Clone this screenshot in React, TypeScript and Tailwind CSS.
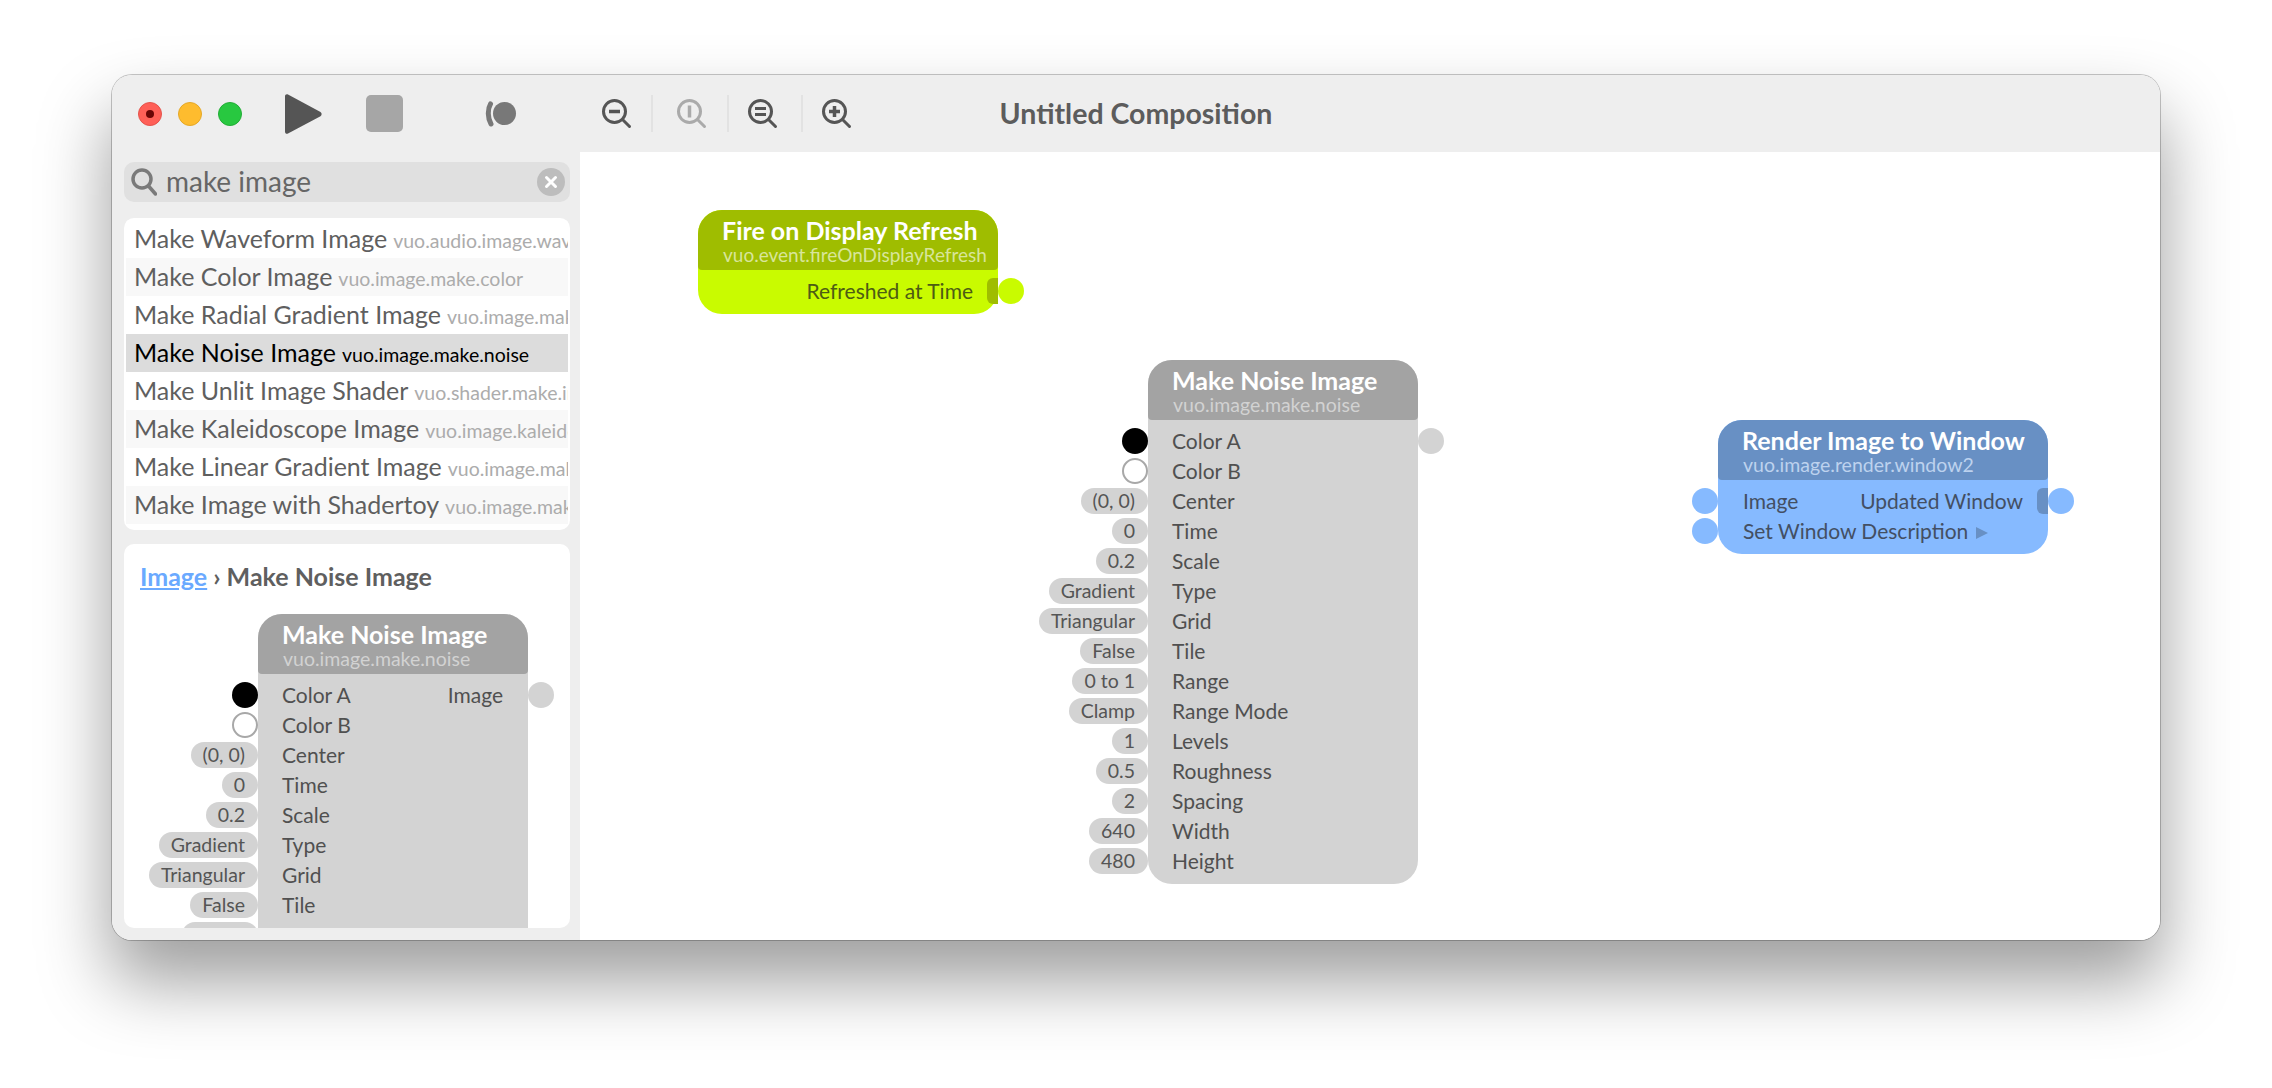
const font = "font-['Lato','Liberation_Sans',sans-serif]";

type Row = { label: string; value?: string; port?: "black" | "white" | "plain" };

const noiseRows: Row[] = [
	{ label: "Color A", port: "black" },
	{ label: "Color B", port: "white" },
	{ label: "Center", value: "(0, 0)" },
	{ label: "Time", value: "0" },
	{ label: "Scale", value: "0.2" },
	{ label: "Type", value: "Gradient" },
	{ label: "Grid", value: "Triangular" },
	{ label: "Tile", value: "False" },
	{ label: "Range", value: "0 to 1" },
	{ label: "Range Mode", value: "Clamp" },
	{ label: "Levels", value: "1" },
	{ label: "Roughness", value: "0.5" },
	{ label: "Spacing", value: "2" },
	{ label: "Width", value: "640" },
	{ label: "Height", value: "480" },
];

const results = [
	["Make Waveform Image", "vuo.audio.image.waveform"],
	["Make Color Image", "vuo.image.make.color"],
	["Make Radial Gradient Image", "vuo.image.make.gradient.radial"],
	["Make Noise Image", "vuo.image.make.noise"],
	["Make Unlit Image Shader", "vuo.shader.make.image.unlit"],
	["Make Kaleidoscope Image", "vuo.image.kaleidoscope"],
	["Make Linear Gradient Image", "vuo.image.make.gradient.linear"],
	["Make Image with Shadertoy", "vuo.image.make.shadertoy"],
];

function ZoomIcon({ color, mark }: { color: string; mark: "minus" | "one" | "fit" | "plus" }) {
	return (
		<svg width="30" height="30" viewBox="0 0 30 30" fill="none" stroke={color} strokeWidth="3" strokeLinecap="round">
			<circle cx="12.500" cy="12.500" r="11" />
			<path d="M20.500 20.500l7 7" />
			{mark === "minus" && <path d="M7 12.500h11" strokeWidth="3.500" strokeLinecap="butt" />}
			{mark === "one" && <path d="M12.500 6.500v12" strokeWidth="3.500" strokeLinecap="butt" />}
			{mark === "fit" && <path d="M7 9.500h11M7 15.500h11" strokeWidth="3" strokeLinecap="butt" />}
			{mark === "plus" && <path d="M7 12.500h11M12.500 7v11" strokeWidth="3.500" strokeLinecap="butt" />}
		</svg>
	);
}

function Separator() {
	return <div className="w-[2px] h-[37px] bg-[#e2e2e2]" />;
}

function Toolbar() {
	return (
		<div className="relative h-[77px] bg-[#eeeeee] flex items-center pl-[26px] shrink-0">
			<div className="flex gap-[16px]">
				<div className="w-[24px] h-[24px] rounded-full bg-[#ff5f57] border border-[#e5534b] flex items-center justify-center">
					<div className="w-[8px] h-[8px] rounded-full bg-[#6b0505]" />
				</div>
				<div className="w-[24px] h-[24px] rounded-full bg-[#febc2e] border border-[#e5a827]" />
				<div className="w-[24px] h-[24px] rounded-full bg-[#28c840] border border-[#22ad36]" />
			</div>
			<svg className="ml-[43px]" width="37" height="42" viewBox="0 0 37 42">
				<path d="M3 1.500 35.500 19a2.500 2.500 0 0 1 0 4.200L3 40.500C1.500 41.300 0 40.300 0 38.700V3.300C0 1.700 1.500 .7 3 1.500z" fill="#555555" />
			</svg>
			<div className="ml-[44px] w-[37px] h-[37px] rounded-[5px] bg-[#a6a6a6]" />
			<svg className="ml-[82px]" width="32" height="26" viewBox="0 0 32 26">
				<circle cx="19.500" cy="12.500" r="11.500" fill="#787878" />
				<path d="M5.500 3C2.500 8 2.500 17 6 23" fill="none" stroke="#787878" strokeWidth="5" strokeLinecap="round" />
			</svg>
			<div className="ml-[85px] flex items-center">
				<ZoomIcon color="#555555" mark="minus" />
				<div className="ml-[19px]"><Separator /></div>
				<div className="ml-[24px]"><ZoomIcon color="#aaaaaa" mark="one" /></div>
				<div className="ml-[20px]"><Separator /></div>
				<div className="ml-[19px]"><ZoomIcon color="#555555" mark="fit" /></div>
				<div className="ml-[23px]"><Separator /></div>
				<div className="ml-[19px]"><ZoomIcon color="#555555" mark="plus" /></div>
			</div>
			<div className="absolute inset-x-0 top-0 h-[77px] flex items-center justify-center text-[28.500px] font-bold text-[#5c5c5c]">
				Untitled Composition
			</div>
		</div>
	);
}

function Port({ className }: { className: string }) {
	return <div className={`w-[26px] h-[26px] rounded-full ${className}`} />;
}

function Pill({ text }: { text: string }) {
	return (
		<div className="absolute right-full top-0 h-[26px] pl-[12px] pr-[13px] rounded-full bg-[#d3d3d3] text-[#555555] text-[19.500px] leading-[26px] whitespace-nowrap">
			{text}
		</div>
	);
}

function NoiseNode({ output }: { output?: string }) {
	return (
		<div className="w-[270px] bg-[#d3d3d3] rounded-[24px] relative pb-[10px]">
			<div className="h-[60px] bg-[#a3a3a3] rounded-t-[24px] rounded-b-[4px] pl-[24px] pt-[7px]">
				<div className="text-[25px] leading-[27px] font-bold text-white">Make Noise Image</div>
				<div className="text-[19.500px] leading-[22px] pl-[1px] text-[#d2d2d2]">vuo.image.make.noise</div>
			</div>
			<div className="pt-[8px] flex flex-col gap-[4px]">
				{noiseRows.map((row, i) => (
					<div key={row.label} className="relative h-[26px] pl-[24px] pr-[25px] flex justify-between text-[21px] leading-[26px] text-[#505050]">
						{row.port === "black" && <Port className="absolute right-full top-0 bg-black" />}
						{row.port === "white" && <Port className="absolute right-full top-0 bg-white border-2 border-[#a8a8a8]" />}
						{row.value && <Pill text={row.value} />}
						<span>{row.label}</span>
						{i === 0 && output && <span>{output}</span>}
						{i === 0 && <Port className="absolute left-full top-0 bg-[#d3d3d3]" />}
					</div>
				))}
			</div>
		</div>
	);
}

function FireNode() {
	return (
		<div className="absolute left-[118px] top-[58px] w-[300px] bg-[#c9fb00] rounded-[24px] pb-[10px]">
			<div className="h-[60px] bg-[#9fbd00] rounded-t-[24px] rounded-b-[4px] pl-[24px] pt-[7px]">
				<div className="text-[25px] leading-[27px] font-bold text-white whitespace-nowrap">Fire on Display Refresh</div>
				<div className="text-[19px] leading-[22px] pl-[1px] text-[#d8e59a] whitespace-nowrap">vuo.event.fireOnDisplayRefresh</div>
			</div>
			<div className="relative mt-[8px] h-[26px] pr-[25px] text-right text-[21px] leading-[26px] text-[#4d5c14]">
				Refreshed at Time
				<div className="absolute right-0 top-0 w-[11px] h-[26px] rounded-l-[6px] bg-[#9fbd00]" />
				<Port className="absolute left-full top-0 bg-[#c9fb00]" />
			</div>
		</div>
	);
}

function RenderNode() {
	return (
		<div className="absolute left-[1138px] top-[268px] w-[330px] bg-[#86baff] rounded-[24px] pb-[10px]">
			<div className="h-[60px] bg-[#6890c4] rounded-t-[24px] rounded-b-[4px] pl-[24px] pt-[7px]">
				<div className="text-[25px] leading-[27px] font-bold text-white whitespace-nowrap">Render Image to Window</div>
				<div className="text-[19.500px] leading-[22px] pl-[1px] text-[#bdd2ee] whitespace-nowrap">vuo.image.render.window2</div>
			</div>
			<div className="pt-[8px] flex flex-col gap-[4px] text-[21px] leading-[26px] text-[#434f63]">
				<div className="relative h-[26px] pl-[25px] pr-[25px] flex justify-between">
					<Port className="absolute right-full top-0 bg-[#86baff]" />
					<span>Image</span>
					<span>Updated Window</span>
					<div className="absolute right-0 top-0 w-[11px] h-[26px] rounded-l-[6px] bg-[#6890c4]" />
					<Port className="absolute left-full top-0 bg-[#86baff]" />
				</div>
				<div className="relative h-[26px] pl-[25px] flex items-center gap-[8px]">
					<Port className="absolute right-full top-0 bg-[#86baff]" />
					<span>Set Window Description</span>
					<svg width="12" height="12" viewBox="0 0 12 12" className="mt-[3px]">
						<path d="M0 0l12 6L0 12z" fill="#6890c4" />
					</svg>
				</div>
			</div>
		</div>
	);
}

function Sidebar() {
	return (
		<div className="w-[468px] shrink-0 bg-[#eeeeee] pl-[12px] pr-[10px] pt-[10px] pb-[12px] flex flex-col">
			<div className="h-[40px] shrink-0 rounded-[10px] bg-[#e0e0e0] flex items-center pl-[7px] pr-[5px]">
				<svg width="26" height="28" viewBox="0 0 26 28" fill="none" stroke="#7a7a7a" strokeWidth="3.500" strokeLinecap="round">
					<circle cx="11" cy="11" r="9" />
					<path d="M17.500 18l7 8" />
				</svg>
				<span className="ml-[9px] text-[28px] leading-[38px] pb-[2px] text-[#666666]">make image</span>
				<div className="ml-auto w-[28px] h-[28px] rounded-full bg-[#bdbdbd] flex items-center justify-center">
					<svg width="14" height="14" viewBox="0 0 14 14" stroke="#ffffff" strokeWidth="3" strokeLinecap="round">
						<path d="M2.500 2.500l9 9M11.500 2.500l-9 9" />
					</svg>
				</div>
			</div>
			<div className="mt-[16px] h-[312px] shrink-0 rounded-[10px] bg-white pt-[2px] px-[2px] flex flex-col overflow-hidden">
				{results.map(([name, id], i) => (
					<div
						key={name}
						className={`h-[38px] shrink-0 pl-[8px] flex items-baseline gap-[6px] whitespace-nowrap overflow-hidden leading-[36px] ${
							i === 3 ? "bg-[#dcdcdc] text-black" : i % 2 === 1 ? "bg-[#f8f8f8] text-[#5f5f5f]" : "bg-white text-[#5f5f5f]"
						}`}
					>
						<span className="text-[25px]">{name}</span>
						<span className={`text-[19.500px] ${i === 3 ? "text-black" : "text-[#acacac]"}`}>{id}</span>
					</div>
				))}
			</div>
			<div className="mt-[14px] flex-1 min-h-0 rounded-[10px] bg-white overflow-hidden relative">
				<div className="pl-[16px] pt-[14px] h-[70px] text-[25px] leading-[36px] font-bold text-[#5f5f5f] whitespace-nowrap">
					<span className="text-[#6aa9ff] underline underline-offset-2">Image</span> › Make Noise Image
				</div>
				<div className="pl-[134px]">
					<NoiseNode output="Image" />
				</div>
			</div>
		</div>
	);
}

export default function App() {
	return (
		<div className={`w-[2272px] h-[1088px] bg-white pl-[112px] pt-[75px] overflow-hidden ${font}`}>
			<div className="w-[2048px] h-[865px] rounded-[20px] overflow-hidden flex flex-col bg-white shadow-[0_0_0_1px_rgba(0,0,0,0.22),0_40px_70px_2px_rgba(0,0,0,0.38)]">
				<Toolbar />
				<div className="flex flex-1 min-h-0">
					<Sidebar />
					<div className="relative flex-1 bg-white">
						<FireNode />
						<div className="absolute left-[568px] top-[208px]">
							<NoiseNode />
						</div>
						<RenderNode />
					</div>
				</div>
			</div>
		</div>
	);
}
